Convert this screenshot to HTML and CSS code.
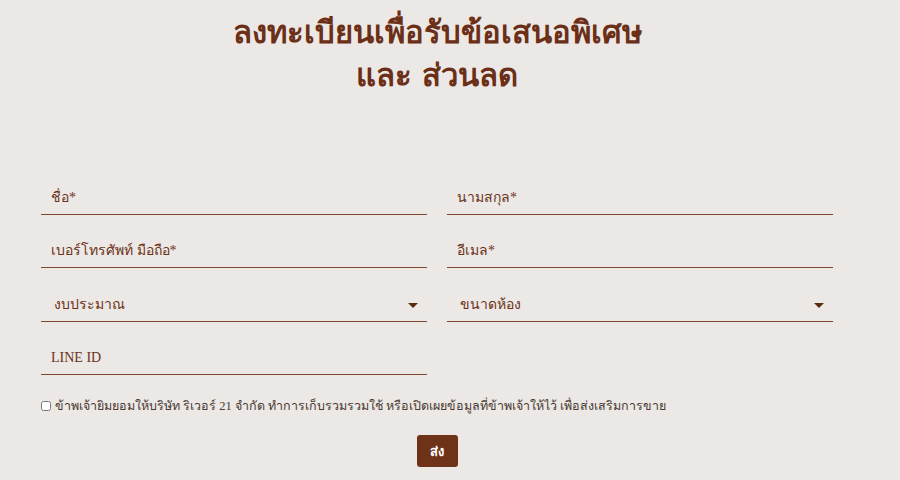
FILE: index.html
```html
<!DOCTYPE html>
<html lang="th">

<head>
  <meta charset="UTF-8" />
  <title>ลงทะเบียน</title>
  <meta name="viewport" content="width=device-width, initial-scale=1.0" />
  <link rel="stylesheet" href="styles.css">
</head>

<body>
  <div class="page">
    <h1 class="title">ลงทะเบียนเพื่อรับข้อเสนอพิเศษ<br>และ ส่วนลด</h1>

    <form class="register-form">
      <div class="form-grid">
        <input type="text" placeholder="ชื่อ*" />
        <input type="text" placeholder="นามสกุล*" />
        <input type="tel" placeholder="เบอร์โทรศัพท์ มือถือ*" />
        <input type="email" placeholder="อีเมล*" />

        <div class="select-wrap">
          <select>
            <option>งบประมาณ</option>
          </select>
          <span class="caret"></span>
        </div>
        <div class="select-wrap">
          <select>
            <option>ขนาดห้อง</option>
          </select>
          <span class="caret"></span>
        </div>

        <input type="text" placeholder="LINE ID" />
      </div>

      <label class="consent">
        <input type="checkbox" />
        ข้าพเจ้ายิมยอมให้บริษัท ริเวอร์ 21 จำกัด ทำการเก็บรวมรวมใช้ หรือเปิดเผยข้อมูลที่ข้าพเจ้าให้ไว้ เพื่อส่งเสริมการขาย
      </label>

      <div class="actions">
        <button type="submit">ส่ง</button>
      </div>
    </form>
  </div>
</body>

</html>
```

FILE: styles.css
```css
* {
  box-sizing: border-box;
  margin: 0;
  padding: 0;
}

body {
  background: #ece8e5;
  font-family: 'Liberation Serif', serif;
  color: #6b3219;
}

.page {
  width: 874px;
  padding: 0 41px;
}

.title {
  font-family: 'DejaVu Sans', 'Liberation Sans', sans-serif;
  font-size: 31px;
  line-height: 43px;
  font-weight: bold;
  text-align: center;
  color: #6b2f17;
  padding-top: 11px;
}

.register-form {
  margin-top: 84px;
}

.form-grid {
  display: grid;
  grid-template-columns: 1fr 1fr;
  column-gap: 20px;
  row-gap: 19px;
}

.form-grid input,
.form-grid select {
  width: 100%;
  height: 34px;
  background: transparent;
  border: none;
  border-bottom: 1px solid #7d4a31;
  font-family: 'Liberation Serif', serif;
  font-size: 14px;
  color: #6b3219;
  padding: 0 10px;
  outline: none;
}

.form-grid input::placeholder {
  color: #6b3219;
}

.select-wrap {
  position: relative;
}

.form-grid select {
  height: 35px;
  padding: 0 13px;
  appearance: none;
  -webkit-appearance: none;
}

.caret {
  position: absolute;
  right: 9px;
  top: 16px;
  border-left: 5px solid transparent;
  border-right: 5px solid transparent;
  border-top: 5px solid #5a2a15;
}

.consent {
  display: flex;
  align-items: center;
  gap: 4px;
  margin-top: 21px;
  font-size: 12.5px;
  color: #4a3a33;
}

.consent input {
  width: 10px;
  height: 10px;
  margin: 0;
}

.actions {
  display: flex;
  justify-content: center;
  margin-top: 19px;
}

.actions button {
  background: #6e3219;
  color: white;
  font-family: 'DejaVu Sans', 'Liberation Sans', sans-serif;
  font-weight: bold;
  font-size: 13px;
  border: none;
  border-radius: 3px;
  width: 41px;
  height: 32px;
  cursor: pointer;
}
```
